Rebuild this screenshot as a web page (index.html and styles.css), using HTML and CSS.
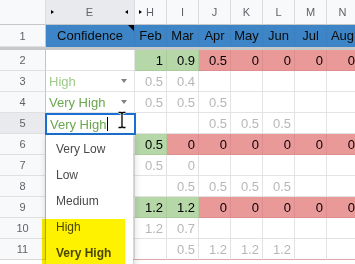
FILE: index.html
```html
<!DOCTYPE html>
<html>
<head>
<meta charset="utf-8">
<link rel="stylesheet" href="styles.css">
</head>
<body>
<div class="sheet">
  <div class="row hdr">
    <div class="c rh corner"></div>
    <div class="c e colh active"><span class="tri-r"></span><span>E</span><span class="tri-l"></span></div>
    <div class="c n colh hcol"><span class="tri-r"></span><span>H</span></div>
    <div class="c n colh">I</div>
    <div class="c n colh">J</div>
    <div class="c n colh">K</div>
    <div class="c n colh">L</div>
    <div class="c n colh">M</div>
    <div class="c n colh">N</div>
  </div>
  <div class="row r1">
    <div class="c rh">1</div>
    <div class="c e blue">Confidence<span class="note"></span></div>
    <div class="c n blue">Feb</div>
    <div class="c n blue">Mar</div>
    <div class="c n blue">Apr</div>
    <div class="c n blue">May</div>
    <div class="c n blue">Jun</div>
    <div class="c n blue">Jul</div>
    <div class="c n blue">Aug</div>
  </div>
  <div class="freeze"></div>
  <div class="row d">
    <div class="c rh">2</div>
    <div class="c e"></div>
    <div class="c n g">1</div>
    <div class="c n g">0.9</div>
    <div class="c n r">0.5</div>
    <div class="c n r">0</div>
    <div class="c n r">0</div>
    <div class="c n r">0</div>
    <div class="c n r">0</div>
  </div>
  <div class="row d">
    <div class="c rh">3</div>
    <div class="c e sel"><span class="lt">High</span><span class="dd"></span></div>
    <div class="c n m">0.5</div>
    <div class="c n m">0.4</div>
    <div class="c n"></div>
    <div class="c n"></div>
    <div class="c n"></div>
    <div class="c n"></div>
    <div class="c n"></div>
  </div>
  <div class="row d">
    <div class="c rh">4</div>
    <div class="c e sel"><span class="dk">Very High</span><span class="dd"></span></div>
    <div class="c n m">0.5</div>
    <div class="c n m">0.5</div>
    <div class="c n m">0.5</div>
    <div class="c n"></div>
    <div class="c n"></div>
    <div class="c n"></div>
    <div class="c n"></div>
  </div>
  <div class="row d">
    <div class="c rh active">5</div>
    <div class="c e"></div>
    <div class="c n"></div>
    <div class="c n"></div>
    <div class="c n m">0.5</div>
    <div class="c n m">0.5</div>
    <div class="c n m">0.5</div>
    <div class="c n"></div>
    <div class="c n"></div>
  </div>
  <div class="row d">
    <div class="c rh">6</div>
    <div class="c e"></div>
    <div class="c n g">0.5</div>
    <div class="c n r">0</div>
    <div class="c n r">0</div>
    <div class="c n r">0</div>
    <div class="c n r">0</div>
    <div class="c n r">0</div>
    <div class="c n r">0</div>
  </div>
  <div class="row d">
    <div class="c rh">7</div>
    <div class="c e"></div>
    <div class="c n m">0.5</div>
    <div class="c n m">0</div>
    <div class="c n"></div>
    <div class="c n"></div>
    <div class="c n"></div>
    <div class="c n"></div>
    <div class="c n"></div>
  </div>
  <div class="row d">
    <div class="c rh">8</div>
    <div class="c e"></div>
    <div class="c n"></div>
    <div class="c n m">0.5</div>
    <div class="c n m">0.5</div>
    <div class="c n m">0.5</div>
    <div class="c n m">0.5</div>
    <div class="c n"></div>
    <div class="c n"></div>
  </div>
  <div class="row d">
    <div class="c rh">9</div>
    <div class="c e"></div>
    <div class="c n g">1.2</div>
    <div class="c n g">1.2</div>
    <div class="c n r">0</div>
    <div class="c n r">0</div>
    <div class="c n r">0</div>
    <div class="c n r">0</div>
    <div class="c n r">0</div>
  </div>
  <div class="row d">
    <div class="c rh">10</div>
    <div class="c e"></div>
    <div class="c n m">1.2</div>
    <div class="c n m">0.7</div>
    <div class="c n"></div>
    <div class="c n"></div>
    <div class="c n"></div>
    <div class="c n"></div>
    <div class="c n"></div>
  </div>
  <div class="row d last">
    <div class="c rh">11</div>
    <div class="c e"></div>
    <div class="c n"></div>
    <div class="c n m">0.5</div>
    <div class="c n m">1.2</div>
    <div class="c n m">1.2</div>
    <div class="c n m">1.2</div>
    <div class="c n"></div>
    <div class="c n"></div>
  </div>

  <div class="editor"><span class="dk">Very High</span><span class="caret"></span></div>
  <svg class="ibeam" width="12" height="18" viewBox="0 0 12 18">
    <path d="M2.5 1.5h2.5l1 1l1-1h2.5M6 2.5v13M2.5 16.5h2.5l1-1l1 1h2.5" fill="none" stroke="#fff" stroke-width="3" stroke-linejoin="round"/>
    <path d="M2.5 1.5h2.5l1 1l1-1h2.5M6 2.5v13M2.5 16.5h2.5l1-1l1 1h2.5" fill="none" stroke="#000" stroke-width="1.3"/>
  </svg>
  <div class="menu">
    <div class="item">Very Low</div>
    <div class="item">Low</div>
    <div class="item">Medium</div>
    <div class="item">High</div>
    <div class="item bold">Very High</div>
  </div>
  <div class="marker"></div>
</div>
</body>
</html>
```
FILE: styles.css
```css
html, body {
  margin: 0;
  padding: 0;
  background: #fff;
}
body {
  font-family: "Liberation Sans", Arial, sans-serif;
  width: 355px;
  height: 264px;
  overflow: hidden;
}
.sheet {
  position: relative;
  width: 355px;
  height: 264px;
  overflow: hidden;
}
.row {
  display: flex;
}
.c {
  flex: none;
  box-sizing: border-box;
  border-right: 1px solid #e2e3e3;
  border-bottom: 1px solid #e2e3e3;
  display: flex;
  align-items: center;
  font-size: 13px;
  color: #000;
  white-space: nowrap;
  overflow: hidden;
}
.rh {
  width: 46px;
  justify-content: center;
  background: #f8f9fa;
  color: #5f6368;
  font-size: 11px;
  border-right-color: #c4c7c5;
  border-bottom-color: #e0e0e0;
}
.rh.active {
  background: #e8eaed;
}
.e {
  width: 89px;
}
.n {
  width: 32px;
  justify-content: flex-end;
  padding-right: 3px;
}
.hdr .c {
  height: 25px;
  background: #f8f9fa;
  color: #5f6368;
  font-size: 11px;
  justify-content: center;
  padding: 0;
  border-bottom-color: #c4c7c5;
  border-right-color: #dadce0;
}
.hdr .c.active {
  background: #e8eaed;
  justify-content: space-between;
  padding: 0 6px 0 5px;
}
.hdr .c.hcol {
  justify-content: flex-start;
  padding-left: 4px;
  gap: 4px;
}
.tri-r {
  width: 0;
  height: 0;
  border-left: 3px solid #000;
  border-top: 2.5px solid transparent;
  border-bottom: 2.5px solid transparent;
}
.tri-l {
  width: 0;
  height: 0;
  border-right: 3px solid #000;
  border-top: 2.5px solid transparent;
  border-bottom: 2.5px solid transparent;
}
.r1 .c {
  height: 22px;
}
.blue {
  background: #3d85c6;
  justify-content: center;
  padding: 0;
  border-right-color: #3b7fbe;
  border-bottom-color: #3d85c6;
  color: #0b0b0b;
  position: relative;
}
.r1 .c.rh {
  border-bottom-color: #e0e0e0;
}
.note {
  position: absolute;
  top: 0;
  right: 0;
  width: 0;
  height: 0;
  border-top: 6px solid #000;
  border-left: 6px solid transparent;
}
.freeze {
  height: 3px;
  background: #c6c8ca;
}
.d .c {
  height: 21px;
}
.d.last .c {
  border-bottom-color: #e0a4a4;
}
.d.last .c.rh {
  border-bottom-color: #d8d8d8;
}
.g {
  background: #b6d7a8;
  border-right-color: #a9cc9a;
  border-bottom-color: #a9cc9a;
}
.r {
  background: #ea9999;
  border-right-color: #de8e8e;
  border-bottom-color: #de8e8e;
}
.m {
  color: #b7b7b7;
}
.sel {
  justify-content: space-between;
  padding: 0 7px 0 3px;
}
.lt {
  color: #9fcb89;
}
.dk {
  color: #6aa84f;
}
.dd {
  width: 0;
  height: 0;
  border-top: 4px solid #808080;
  border-left: 3.5px solid transparent;
  border-right: 3.5px solid transparent;
}
.editor {
  position: absolute;
  left: 45px;
  top: 113px;
  width: 91px;
  height: 22px;
  box-sizing: border-box;
  border: 2px solid #1a6fd4;
  background: #fff;
  display: flex;
  align-items: center;
  padding-left: 3px;
  font-size: 13px;
}
.caret {
  display: inline-block;
  width: 1px;
  height: 14px;
  background: #000;
  margin-left: 1px;
}
.ibeam {
  position: absolute;
  left: 116px;
  top: 111px;
}
.menu {
  position: absolute;
  left: 46px;
  top: 135px;
  width: 87px;
  height: 140px;
  background: #fff;
  padding-top: 1px;
  box-sizing: border-box;
  box-shadow: 0 1px 2px rgba(60, 64, 67, 0.3), 1px 2px 6px 2px rgba(60, 64, 67, 0.15);
}
.item {
  height: 26px;
  display: flex;
  align-items: center;
  padding-left: 10px;
  font-size: 12px;
  color: #4a4a4a;
}
.item.bold {
  font-weight: bold;
}
.marker {
  position: absolute;
  left: 42px;
  top: 219px;
  width: 83px;
  height: 50px;
  background: #fff200;
  mix-blend-mode: multiply;
}
```
